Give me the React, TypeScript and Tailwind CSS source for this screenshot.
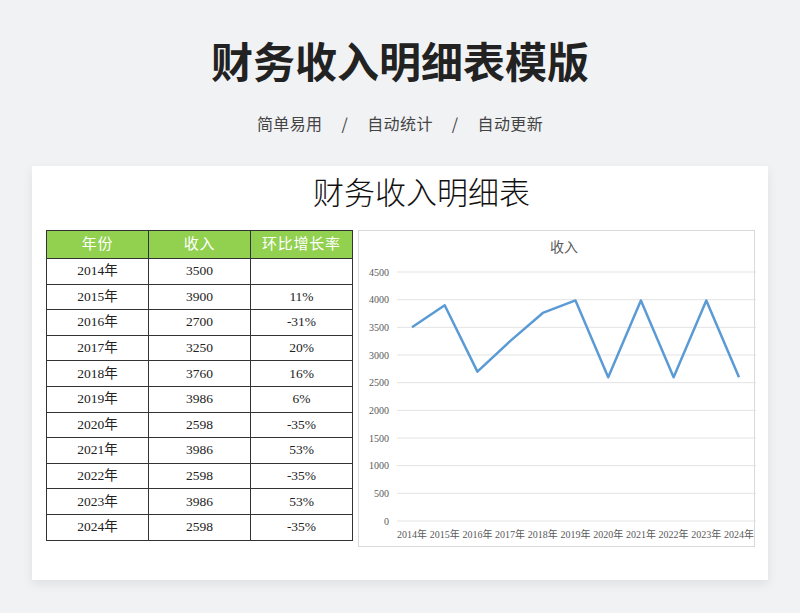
import React from 'react';

const rows = [
  ['2014年', '3500', ''],
  ['2015年', '3900', '11%'],
  ['2016年', '2700', '-31%'],
  ['2017年', '3250', '20%'],
  ['2018年', '3760', '16%'],
  ['2019年', '3986', '6%'],
  ['2020年', '2598', '-35%'],
  ['2021年', '3986', '53%'],
  ['2022年', '2598', '-35%'],
  ['2023年', '3986', '53%'],
  ['2024年', '2598', '-35%'],
];

const serif = { fontFamily: '"Liberation Serif", "Noto Sans CJK SC", serif' };

function Chart() {
  const y = (v: number) => 290 - (v / 4500) * 249;
  const x = (i: number) => 53 + i * 32.7;
  const pts = rows.map((r, i) => `${x(i)},${y(Number(r[1]))}`).join(' ');
  return (
    <div className="w-[397px] h-[317px] border border-[#d9d9d9] bg-white">
      <svg width="397" height="317" style={serif}>
        <text x="205" y="21" textAnchor="middle" fontSize="14" fill="#595959">收入</text>
        {Array.from({ length: 10 }, (_, k) => (
          <g key={k}>
            <line x1="38" x2="397" y1={y(k * 500)} y2={y(k * 500)} stroke="#e3e3e3" />
            <text x="30" y={y(k * 500) + 3.5} textAnchor="end" fontSize="10" fill="#595959">{k * 500}</text>
          </g>
        ))}
        <polyline points={pts} fill="none" stroke="#5b9bd5" strokeWidth="2.5" strokeLinejoin="round" />
        {rows.map((r, i) => (
          <text key={i} x={x(i)} y="307" textAnchor="middle" fontSize="10" fill="#595959">{r[0]}</text>
        ))}
      </svg>
    </div>
  );
}

export default function App() {
  return (
    <div className="w-[800px] h-[613px] bg-[#f1f2f4] flex flex-col items-center" style={{ fontFamily: '"Noto Sans CJK SC", sans-serif' }}>
      <h1 className="mt-[30px] text-[42px] leading-[60px] font-bold text-[#222]">财务收入明细表模版</h1>
      <p className="mt-[21px] text-[16px] leading-[24px] text-[#444] tracking-wide">
        简单易用<span className="mx-[19px]">/</span>自动统计<span className="mx-[19px]">/</span>自动更新
      </p>
      <div className="mt-[31px] w-[736px] h-[414px] bg-white shadow-[0_4px_10px_rgba(0,0,0,0.08)] pl-[14px] pt-[8px]">
        <div className="text-[31px] leading-[40px] text-[#111] font-light pl-[267px]" style={serif}>财务收入明细表</div>
        <div className="mt-[16px] flex items-start gap-[5px]">
          <table className="border-collapse text-[13.5px] text-[#222]" style={serif}>
            <thead>
              <tr className="bg-[#92d050] text-white h-[28px]">
                {['年份', '收入', '环比增长率'].map((h) => (
                  <th key={h} className="w-[102px] border border-[#333] font-normal text-[15px] tracking-wider">{h}</th>
                ))}
              </tr>
            </thead>
            <tbody>
              {rows.map((r) => (
                <tr key={r[0]} className="h-[25.6px]">
                  {r.map((c, j) => (
                    <td key={j} className="border border-[#333] text-center p-0">{c}</td>
                  ))}
                </tr>
              ))}
            </tbody>
          </table>
          <Chart />
        </div>
      </div>
    </div>
  );
}
